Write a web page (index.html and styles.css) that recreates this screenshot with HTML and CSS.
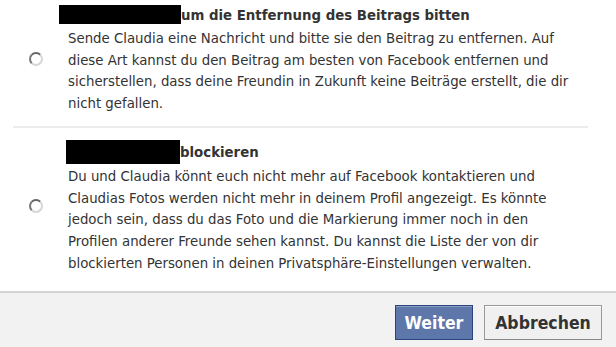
FILE: index.html
```html
<!DOCTYPE html>
<html lang="de">
<head>
    <meta charset="UTF-8">
    <meta name="viewport" content="width=device-width, initial-scale=1.0">
    <title>Beitrag melden</title>
    <link rel="stylesheet" href="styles.css">
</head>
<body>

    <div class="dialog">
        <!-- Option 1: um Entfernung bitten -->
        <label class="option option-first">
            <span class="radio"></span>
            <span class="option-text">
                <span class="option-title"><span class="redacted redacted-one"></span>um die Entfernung des Beitrags bitten</span>
                <span class="option-desc">Sende Claudia eine Nachricht und bitte sie den Beitrag zu entfernen. Auf<br>diese Art kannst du den Beitrag am besten von Facebook entfernen und<br>sicherstellen, dass deine Freundin in Zukunft keine Beiträge erstellt, die dir<br>nicht gefallen.</span>
            </span>
        </label>

        <!-- Option 2: blockieren -->
        <label class="option option-second">
            <span class="radio"></span>
            <span class="option-text">
                <span class="option-title"><span class="redacted redacted-two"></span>blockieren</span>
                <span class="option-desc">Du und Claudia könnt euch nicht mehr auf Facebook kontaktieren und<br>Claudias Fotos werden nicht mehr in deinem Profil angezeigt. Es könnte<br>jedoch sein, dass du das Foto und die Markierung immer noch in den<br>Profilen anderer Freunde sehen kannst. Du kannst die Liste der von dir<br>blockierten Personen in deinen Privatsphäre-Einstellungen verwalten.</span>
            </span>
        </label>

        <div class="footer">
            <button class="btn btn-primary">Weiter</button>
            <button class="btn btn-cancel">Abbrechen</button>
        </div>
    </div>

</body>
</html>
```

FILE: styles.css
```css
* {
    margin: 0;
    padding: 0;
    box-sizing: border-box;
}

body {
    font-family: 'DejaVu Sans', Tahoma, Verdana, sans-serif;
    font-stretch: condensed;
    font-size: 14.8px;
    color: #333;
    background-color: #fff;
}

.dialog {
    width: 616px;
    height: 347px;
    display: flex;
    flex-direction: column;
}

.option {
    display: flex;
    align-items: center;
    margin: 0 28px 0 13px;
    padding-left: 16px;
}

.option-first {
    padding-top: 4px;
    padding-bottom: 12px;
    border-bottom: 2px solid #ececec;
}

.option-second {
    padding-top: 13px;
    flex: 1;
    align-items: flex-start;
}

.option-second .radio {
    margin-top: 58px;
}

.radio {
    flex: none;
    width: 14px;
    height: 14px;
    border-radius: 50%;
    border: 2px solid #d6d6d6;
    border-top-color: #666;
    border-left-color: #777;
    background-color: #fff;
    margin-right: 25px;
}

.option-text {
    display: block;
    white-space: nowrap;
}

.option-title {
    display: block;
    font-weight: bold;
    line-height: 22px;
    margin-bottom: 1px;
}

.option-desc {
    display: block;
    line-height: 21.7px;
}

.redacted {
    display: inline-block;
    background-color: #000;
    vertical-align: middle;
}

.redacted-one {
    width: 122px;
    height: 19px;
    margin-left: -9px;
    margin-top: -3px;
}

.redacted-two {
    width: 114px;
    height: 24px;
    margin-left: -2px;
    margin-top: -2px;
}

.footer {
    display: flex;
    justify-content: flex-end;
    gap: 11px;
    background-color: #f2f2f2;
    border-top: 2px solid #d4d4d4;
    padding: 12px 14px 0 0;
    height: 56px;
}

.btn {
    height: 35px;
    font-family: 'DejaVu Sans', Tahoma, Verdana, sans-serif;
    font-stretch: condensed;
    font-size: 17.5px;
    font-weight: bold;
    cursor: pointer;
}

.btn-primary {
    width: 78px;
    color: #fff;
    background-color: #5e77aa;
    border: 1px solid #29447e;
    box-shadow: inset 0 1px 0 #8a9cc2;
}

.btn-primary:hover {
    background-color: #4f6aa0;
}

.btn-cancel {
    width: 118px;
    color: #333;
    background-color: #f0f0f0;
    border: 1px solid #999;
    border-bottom-color: #888;
    box-shadow: inset 0 1px 0 #fff;
}
```
